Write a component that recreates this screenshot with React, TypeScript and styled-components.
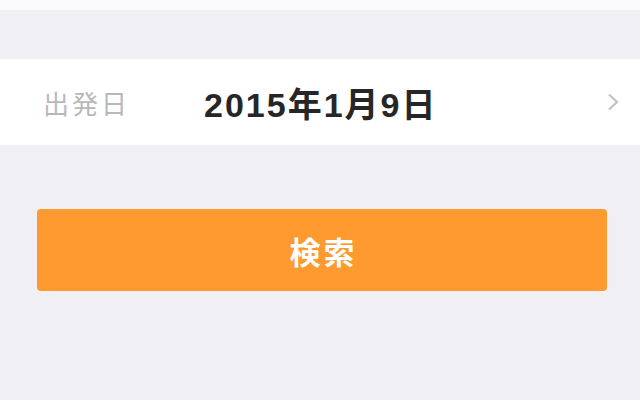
import React from "react";
import styled, { createGlobalStyle } from "styled-components";

const Global = createGlobalStyle`
  html, body { margin: 0; padding: 0; background: #efeff4; }
  body { font-family: "Noto Sans CJK JP", "Liberation Sans", sans-serif; }
`;

const Page = styled.div`
  width: 640px;
  height: 400px;
  display: flex;
  flex-direction: column;
  background: #efeff4;
  overflow: hidden;
`;

const TopStrip = styled.div`
  height: 10px;
  background: #fafafc;
`;

const Spacer = styled.div<{ h: number }>`
  height: ${(p) => p.h}px;
  flex-shrink: 0;
`;

const Row = styled.div`
  height: 86px;
  background: #ffffff;
  display: flex;
  align-items: center;
  padding: 0 20px 0 43px;
`;

const Label = styled.span`
  width: 161px;
  font-size: 26px;
  color: #b8b8bc;
  letter-spacing: 3px;
`;

const Value = styled.span`
  flex: 1;
  font-family: "Liberation Sans", "Noto Sans CJK JP", sans-serif;
  font-weight: 700;
  font-size: 34px;
  color: #262626;
  letter-spacing: 2px;
`;

const Chevron = styled.svg`
  width: 14px;
  height: 22px;
`;

const ButtonWrap = styled.div`
  padding: 0 33px 0 37px;
`;

const SearchButton = styled.button`
  width: 100%;
  height: 82px;
  border: none;
  border-radius: 4px;
  background: #fe9a2f;
  color: #fff;
  font-family: "Noto Sans CJK JP", sans-serif;
  font-size: 31px;
  font-weight: 700;
  letter-spacing: 3px;
  padding: 0 0 0 3px;
`;

export default function App() {
  return (
    <Page>
      <Global />
      <TopStrip />
      <Spacer h={49} />
      <Row>
        <Label>出発日</Label>
        <Value>2015年1月9日</Value>
        <Chevron viewBox="0 0 14 22">
          <path d="M3 3.5 L11 11 L3 18.5" fill="none" stroke="#c2c2c6" strokeWidth="2.2" />
        </Chevron>
      </Row>
      <Spacer h={64} />
      <ButtonWrap>
        <SearchButton>検索</SearchButton>
      </ButtonWrap>
    </Page>
  );
}
